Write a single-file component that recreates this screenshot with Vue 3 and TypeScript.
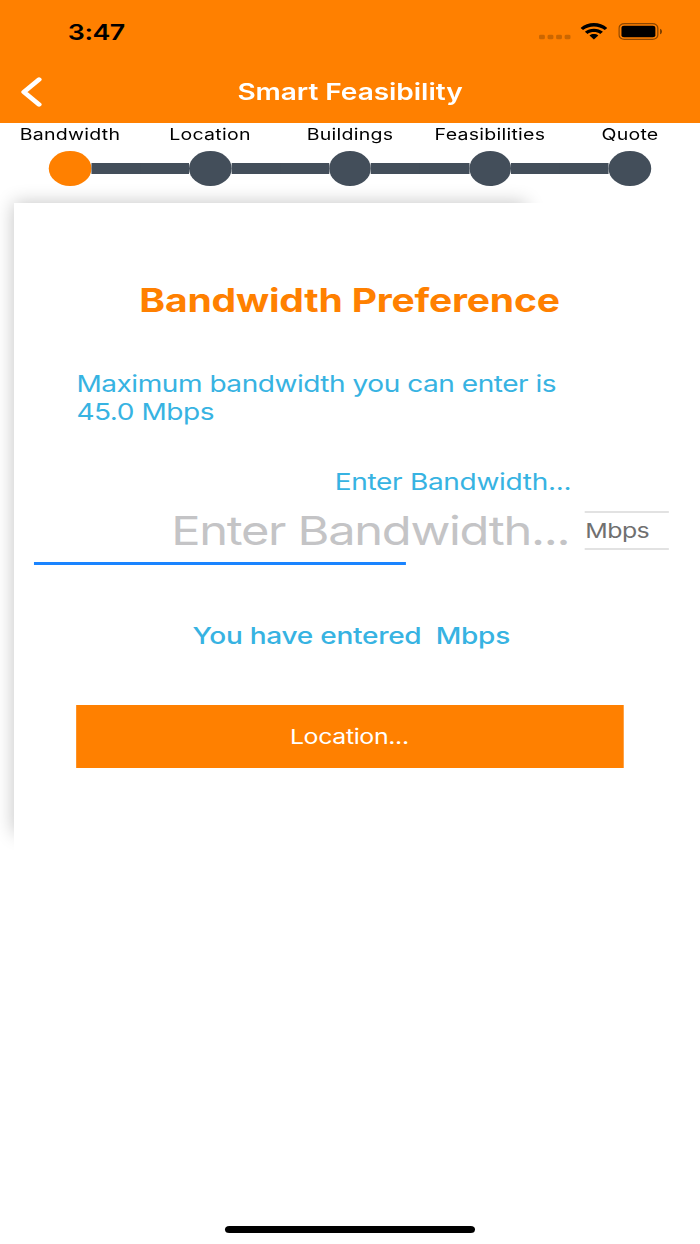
<script setup lang="ts">
import { ref } from 'vue'

const steps: string[] = ['Bandwidth', 'Location', 'Buildings', 'Feasibilities', 'Quote']
const current = ref(0)
const bandwidth = ref('')
const maximum = '45.0'
</script>

<template>
  <div class="viewport">
    <main class="screen">
      <header class="header">
        <div class="status">
          <span class="time">3:47</span>
          <div class="indicators">
            <svg class="signal" width="27" height="6" viewBox="0 0 27 6">
              <rect v-for="n in 4" :key="n" :x="(n - 1) * 7" y="0.7" width="4.8" height="4.6" rx="1.4" />
            </svg>
            <svg class="wifi" width="22" height="17" viewBox="0 0 22 17">
              <path d="M0 4.9 C6 -1.5 16 -1.5 22 4.9 L19.9 7.1 C14.9 2.4 7.1 2.4 2.1 7.1 Z" />
              <path d="M3.6 8.7 C7.6 4.6 14.4 4.6 18.4 8.7 L16.2 10.9 C13.3 8.3 8.7 8.3 5.8 10.9 Z" />
              <path d="M7.4 12.5 C9.4 10.6 12.6 10.6 14.6 12.5 L11 16.4 Z" />
            </svg>
            <svg class="battery" width="37" height="17" viewBox="0 0 37 17">
              <rect class="battery-shell" x="0.6" y="0.6" width="31.8" height="15.8" rx="4.4" />
              <rect x="2.6" y="2.8" width="27.8" height="11.4" rx="2" />
              <path class="battery-cap" d="M34.2 5.7 C36.4 6.5 36.4 10.5 34.2 11.3 Z" />
            </svg>
          </div>
        </div>
        <nav class="nav">
          <button class="back" aria-label="Back">
            <svg width="18" height="30" viewBox="0 0 18 30">
              <path d="M15 2.5 L2.6 15 L15 27.5" />
            </svg>
          </button>
          <h1 class="title">Smart Feasibility</h1>
        </nav>
      </header>

      <ol class="steps">
        <li v-for="(step, i) in steps" :key="step" class="step">
          <span class="step-label">{{ step }}</span>
          <div class="step-track">
            <i class="bar" :class="{ hidden: i === 0 }"></i>
            <i class="dot" :class="{ active: i === current }"></i>
            <i class="bar outgoing" :class="{ hidden: i === steps.length - 1 }"></i>
          </div>
        </li>
      </ol>

      <section class="card-wrap">
        <div class="shade"></div>
        <div class="card">
          <h2 class="heading">Bandwidth Preference</h2>
          <p class="hint">
            Maximum bandwidth you can enter is<br />
            {{ maximum }} Mbps
          </p>
          <label class="field-label" for="bandwidth">Enter Bandwidth...</label>
          <div class="row">
            <div class="field">
              <input id="bandwidth" v-model="bandwidth" placeholder="Enter Bandwidth..." />
              <div class="underline"></div>
            </div>
            <div class="unit">Mbps</div>
          </div>
          <p class="entered">You have entered {{ bandwidth }} Mbps</p>
          <button class="next">Location...</button>
        </div>
      </section>

      <div class="home"></div>
    </main>
  </div>
</template>

<style>
body {
  background: #fff;
}
</style>

<style scoped>
.viewport {
  width: 700px;
  height: 1244px;
  overflow: hidden;
  background: #fff;
}
.screen {
  width: 574px;
  height: 1244px;
  display: flex;
  flex-direction: column;
  transform: scaleX(1.219512);
  transform-origin: 0 0;
  font-family: Inter, 'Liberation Sans', sans-serif;
  color: #000;
}
.screen * {
  box-sizing: border-box;
}
h1, h2, p, ol {
  margin: 0;
  padding: 0;
}
button {
  border: 0;
  padding: 0;
  font-family: inherit;
}
.header {
  height: 122.6px;
  background: #ff8000;
  flex: none;
}
.status {
  height: 63px;
  display: flex;
  align-items: center;
  justify-content: space-between;
  padding: 0 30px 0 55.6px;
}
.time {
  font-size: 22px;
  font-weight: 600;
  letter-spacing: -0.4px;
}
.indicators {
  display: flex;
  align-items: center;
}
.signal {
  margin: 11px 7px 0 0;
  fill: #000;
  opacity: 0.2;
}
.battery {
  margin-left: 9px;
}
.battery-shell {
  fill: none;
  stroke: #000;
  stroke-opacity: 0.45;
  stroke-width: 1.1;
}
.battery-cap {
  fill-opacity: 0.5;
}
.nav {
  height: 58px;
  display: grid;
  grid-template-columns: 60px 1fr 60px;
  align-items: center;
}
.back {
  display: flex;
  width: 18px;
  margin-left: 17px;
  background: none;
}
.back path {
  fill: none;
  stroke: #fff;
  stroke-width: 4.2;
  stroke-linecap: round;
  stroke-linejoin: round;
}
.title {
  font-size: 23px;
  line-height: 30px;
  font-weight: 600;
  letter-spacing: -0.04px;
  color: #fff;
  text-align: center;
  white-space: nowrap;
}
.steps {
  display: flex;
  height: 80px;
  list-style: none;
  flex: none;
}
.step {
  flex: 1;
  display: flex;
  flex-direction: column;
  align-items: center;
  padding-top: 1.4px;
}
.step-label {
  font-size: 16px;
  line-height: 20px;
  letter-spacing: 0.22px;
  white-space: nowrap;
}
.step-track {
  width: 100%;
  display: flex;
  align-items: center;
  height: 35px;
  margin-top: 7.2px;
}
.bar {
  flex: 1;
  height: 11.6px;
  background: #434e5a;
}
.bar.outgoing {
  box-shadow: 1px 0 0 #434e5a;
}
.bar.hidden {
  visibility: hidden;
}
.dot {
  width: 34.6px;
  height: 35px;
  border-radius: 50%;
  background: #434e5a;
}
.dot.active {
  background: #ff8000;
}
.card-wrap {
  position: relative;
  flex: 1;
  padding-left: 11px;
  transform: translateX(0.45px);
}
.shade {
  position: absolute;
  left: 11px;
  top: 0.4px;
  width: 421px;
  height: 630px;
  box-shadow: 0 0 16px rgba(0, 0, 0, 0.24);
}
.card {
  position: relative;
  height: 100%;
  margin-top: 0.4px;
  padding-top: 78.3px;
  background: #fff;
}
.heading {
  margin-left: -12.6px;
  font-size: 32px;
  line-height: 40px;
  font-weight: 700;
  letter-spacing: -0.16px;
  color: #ff8000;
  text-align: center;
  white-space: nowrap;
}
.hint {
  margin: 48.3px 0 0 51.2px;
  font-size: 23px;
  line-height: 28px;
  letter-spacing: -0.39px;
  color: #37b3e2;
  white-space: nowrap;
}
.field-label {
  display: block;
  margin: 42.5px 106px 0 0;
  font-size: 23px;
  line-height: 28px;
  letter-spacing: -0.26px;
  color: #37b3e2;
  text-align: right;
}
.row {
  display: flex;
  height: 69px;
  padding-left: 16px;
}
.field {
  width: 441px;
}
.field input {
  display: block;
  width: 100%;
  height: 65.6px;
  padding: 4px 1.6px 0 0;
  border: 0;
  outline: 0;
  background: none;
  font-family: inherit;
  font-size: 40px;
  letter-spacing: -1.06px;
  text-align: right;
}
.field input::placeholder {
  color: #c4c4c6;
  opacity: 1;
}
.underline {
  width: 305px;
  height: 3px;
  background: #1a84ff;
  transform: translateX(0.4px);
}
.unit {
  width: 69px;
  height: 39px;
  margin: 14.5px 0 0 11px;
  padding-left: 0.4px;
  border-top: 2px solid #e2e2e2;
  border-bottom: 2px solid #e2e2e2;
  font-size: 20.4px;
  line-height: 36px;
  letter-spacing: -0.4px;
  color: #707070;
}
.entered {
  margin: 56.8px 0 0 -9.8px;
  font-size: 23px;
  line-height: 28px;
  font-weight: 500;
  letter-spacing: -0.24px;
  color: #37b3e2;
  text-align: center;
  white-space: pre;
}
.next {
  display: block;
  width: 449px;
  height: 62.6px;
  margin: 55.3px 0 0 51px;
  padding: 1px 1px 0 0;
  background: #ff8000;
  color: #fff;
  font-size: 20.4px;
  letter-spacing: -0.28px;
}
.home {
  position: absolute;
  left: 184px;
  top: 1225.5px;
  width: 205px;
  height: 7px;
  border-radius: 3.5px;
  background: #000;
  transform: translateX(0.5px);
}
</style>
